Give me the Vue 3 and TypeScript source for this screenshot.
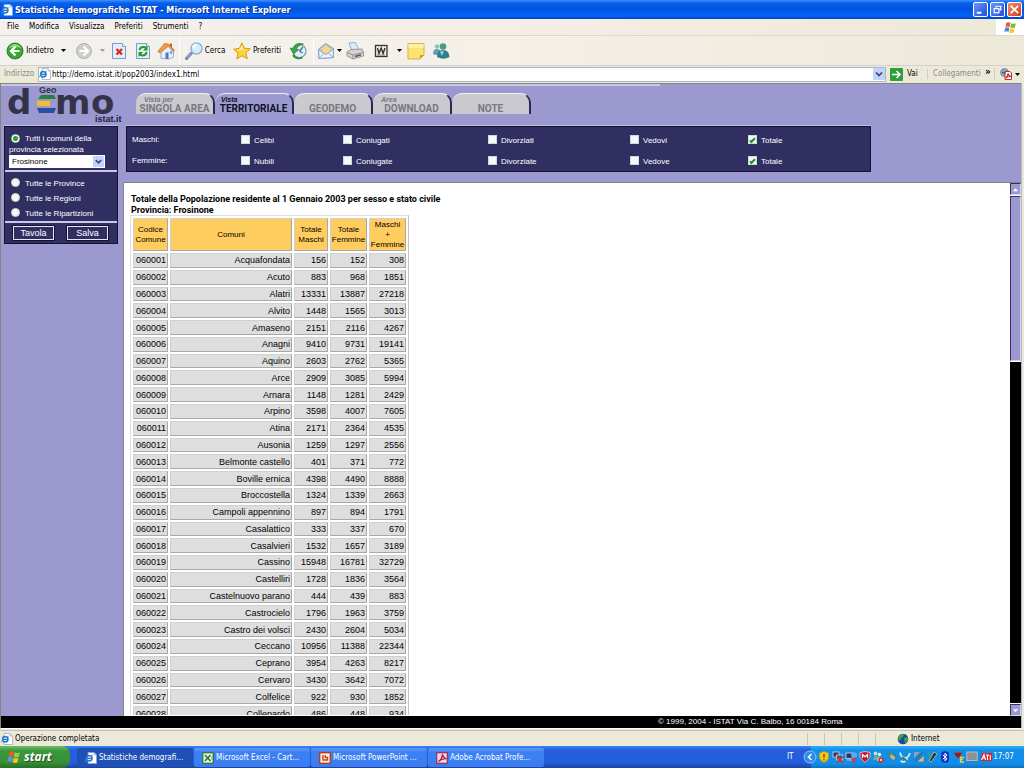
<script setup lang="ts">
import { ref } from 'vue'

interface Row { code: string; name: string; m: number; f: number }

const source: [string, number, number][] = [
  ['Acquafondata', 156, 152], ['Acuto', 883, 968], ['Alatri', 13331, 13887], ['Alvito', 1448, 1565],
  ['Amaseno', 2151, 2116], ['Anagni', 9410, 9731], ['Aquino', 2603, 2762], ['Arce', 2909, 3085],
  ['Arnara', 1148, 1281], ['Arpino', 3598, 4007], ['Atina', 2171, 2364], ['Ausonia', 1259, 1297],
  ['Belmonte castello', 401, 371], ['Boville ernica', 4398, 4490], ['Broccostella', 1324, 1339],
  ['Campoli appennino', 897, 894], ['Casalattico', 333, 337], ['Casalvieri', 1532, 1657],
  ['Cassino', 15948, 16781], ['Castelliri', 1728, 1836], ['Castelnuovo parano', 444, 439],
  ['Castrocielo', 1796, 1963], ['Castro dei volsci', 2430, 2604], ['Ceccano', 10956, 11388],
  ['Ceprano', 3954, 4263], ['Cervaro', 3430, 3642], ['Colfelice', 922, 930], ['Collepardo', 486, 448],
]
const rows: Row[] = source.map(([name, m, f], i) => ({
  code: '06' + String(i + 1).padStart(4, '0'), name, m, f,
}))

const menus = ['File', 'Modifica', 'Visualizza', 'Preferiti', 'Strumenti', '?']
const tabs = [
  { top: 'Vista per', text: 'SINGOLA AREA', active: false },
  { top: 'Vista', text: 'TERRITORIALE', active: true },
  { top: '', text: 'GEODEMO', active: false },
  { top: 'Area', text: 'DOWNLOAD', active: false },
  { top: '', text: 'NOTE', active: false },
]
const filters = ref([
  { title: 'Maschi:', items: [['Celibi', false], ['Coniugati', false], ['Divorziati', false], ['Vedovi', false], ['Totale', true]] as [string, boolean][] },
  { title: 'Femmine:', items: [['Nubili', false], ['Coniugate', false], ['Divorziate', false], ['Vedove', false], ['Totale', true]] as [string, boolean][] },
])
const scope = ref('comuni')
const scopes = [
  { id: 'province', text: 'Tutte le Province' },
  { id: 'regioni', text: 'Tutte le Regioni' },
  { id: 'ripartizioni', text: 'Tutte le Ripartizioni' },
]
const address = ref('http://demo.istat.it/pop2003/index1.html')
const tasks = [
  { icon: 'i-iedoc', text: 'Statistiche demografi...', active: true },
  { icon: 'i-excel', text: 'Microsoft Excel - Cart...', active: false },
  { icon: 'i-ppt', text: 'Microsoft PowerPoint ...', active: false },
  { icon: 'i-acro', text: 'Adobe Acrobat Profe...', active: false },
]
const tray = ['t-shield', 't-netx', 't-monx', 't-mcafee', 't-people', 't-usb', 't-swirl', 't-pen', 't-wand', 't-bt', 't-tri', 't-disp', 't-ati']
</script>

<template>
  <div class="screen">
    <svg class="defs" aria-hidden="true">
      <symbol id="i-iedoc" viewBox="0 0 12 12">
        <path d="M3 0.5h6l2.5 2.5v8.5H3z" fill="#fff" stroke="#8aa6cc" stroke-width=".7" />
        <path d="M9 .5V3h2.5" fill="#cfe0f4" stroke="#8aa6cc" stroke-width=".6" />
        <circle cx="4.3" cy="6.3" r="2.7" fill="#d9f0ff" stroke="#2472c8" stroke-width="1.5" />
        <path d="M2 6.4h4.8" stroke="#2472c8" stroke-width="1.2" />
        <path d="M.6 9.6C-.4 7.5 4 3 8 3.2" fill="none" stroke="#54a5e6" stroke-width=".8" />
      </symbol>
      <symbol id="i-excel" viewBox="0 0 12 12">
        <rect x=".7" y=".7" width="10.6" height="10.6" fill="#e9f6e5" stroke="#2b7a3a" stroke-width="1.3" />
        <path d="M3 3l5.5 6M8.5 3L3 9" stroke="#237a35" stroke-width="1.6" /><path d="M9 5h2M9 7h2" stroke="#69a874" />
      </symbol>
      <symbol id="i-ppt" viewBox="0 0 12 12">
        <rect x=".7" y=".7" width="10.6" height="10.6" fill="#fff0e6" stroke="#b93c17" stroke-width="1.4" />
        <path d="M4 3v5h4.500V5.500H6.300V3" fill="none" stroke="#cb4319" stroke-width="1.400" />
      </symbol>
      <symbol id="i-acro" viewBox="0 0 12 12">
        <rect x=".7" y=".7" width="10.6" height="10.6" fill="#efd5ec" stroke="#9b2a54" stroke-width="1.2" />
        <path d="M2.5 9.5C5 8 6.500 5 6.300 2.300c1 3 2 4 4 4.500C7 6.500 4.500 7.500 2.500 9.500z" fill="none" stroke="#a31b3e" stroke-width="1.2" />
      </symbol>
      <symbol id="t-shield" viewBox="0 0 12 12">
        <path d="M6 .5l4.600 1.500v4Q10.600 9.500 6 11.500 1.400 9.500 1.400 6V2z" fill="#f7c51e" stroke="#c99008" stroke-width=".7" />
        <path d="M6 3v3.800M6 8v1.400" stroke="#6b4a00" stroke-width="1.300" />
      </symbol>
      <symbol id="t-netx" viewBox="0 0 12 12">
        <rect x="1" y="1" width="6" height="5" fill="#27356d" stroke="#b8c2d4" /><rect x="4.500" y="4" width="6" height="5" fill="#3656a4" stroke="#b8c2d4" />
        <path d="M5 5.500l6 6M11 5.500l-6 6" stroke="#e02c1c" stroke-width="1.700" />
      </symbol>
      <symbol id="t-monx" viewBox="0 0 12 12">
        <rect x="1" y="2" width="6" height="5.500" fill="#27356d" stroke="#b8c2d4" /><path d="M2 9h5" stroke="#b8c2d4" /><path d="M9 1v6M11 2v4" stroke="#c9d7ef" stroke-width=".8" />
        <path d="M6.500 7l4.500 4.500M11 7l-4.500 4.500" stroke="#d03a4c" stroke-width="1.500" />
      </symbol>
      <symbol id="t-mcafee" viewBox="0 0 12 12">
        <path d="M1 1.500L6 .5l5 1v5L6 11.500l-5-5z" fill="#c1183b" stroke="#f0d0d8" stroke-width=".8" /><path d="M3.500 7V3.500L6 5.800l2.500-2.300V7" fill="none" stroke="#fff" stroke-width="1.200" />
      </symbol>
      <symbol id="t-people" viewBox="0 0 12 12">
        <circle cx="3.500" cy="2.500" r="1.900" fill="#bfe3d4" /><path d="M1 9q0-4.500 3-4.500T7 9z" fill="#62b09a" /><circle cx="7.500" cy="3.500" r="1.800" fill="#e9f6f1" /><path d="M5 10q0-4 3-4t3 4z" fill="#a5d8c3" />
        <circle cx="9" cy="9" r="2.700" fill="#dd2a1a" /><path d="M7.900 7.900l2.200 2.200M10.100 7.900l-2.200 2.200" stroke="#fff" stroke-width=".8" />
      </symbol>
      <symbol id="t-usb" viewBox="0 0 12 12">
        <path d="M2 2l4 1 4 3-2 4-4-3z" fill="#a8b4b0" stroke="#4c6658" stroke-width=".7" /><path d="M1.500 1.500l3 3M8 4l2-2" stroke="#2e9d3e" stroke-width="1.600" />
      </symbol>
      <symbol id="t-swirl" viewBox="0 0 12 12">
        <path d="M1 1.500q1 5 4.500 5.500T11 2M1.500 10q4.500 2.500 7-2.500" fill="none" stroke="#d8e8ee" stroke-width="1.800" /><path d="M3 6l5 4" stroke="#27896c" stroke-width="1.800" />
      </symbol>
      <symbol id="t-pen" viewBox="0 0 12 12">
        <path d="M1 1h6L1 7z" fill="#9b9faa" /><path d="M11 4v7H4z" fill="#c1bba7" stroke="#69645a" stroke-width=".6" /><path d="M2 10L10 1" stroke="#4c525d" />
      </symbol>
      <symbol id="t-wand" viewBox="0 0 12 12">
        <path d="M8 1l3 2-6 8-2-1z" fill="#24312c" stroke="#b4ceb8" stroke-width=".8" /><path d="M2 2l3 5" stroke="#44a45b" stroke-width="1.700" />
      </symbol>
      <symbol id="t-bt" viewBox="0 0 12 12">
        <rect x="2" y=".3" width="8" height="11.400" rx="3.500" fill="#0a35c4" /><path d="M3.800 3.800l4.200 4L6 9.800V2.200l2 2-4.200 4" fill="none" stroke="#fff" />
      </symbol>
      <symbol id="t-tri" viewBox="0 0 12 12">
        <path d="M.5 1.500h9L5 8z" fill="#cf2323" /><path d="M2 3h6M3 5h4" stroke="#321414" stroke-width=".8" /><path d="M11 6.500H7.500v4.500H11M7.500 8.700H10" fill="none" stroke="#f4d531" stroke-width="1.300" />
      </symbol>
      <symbol id="t-disp" viewBox="0 0 12 12">
        <rect x=".8" y="1" width="10.400" height="8.500" fill="#8e9297" stroke="#b7bcc0" /><path d="M1 11h10" stroke="#686c70" stroke-width="1.200" stroke-dasharray="2 1" />
      </symbol>
      <symbol id="t-ati" viewBox="0 0 12 12">
        <path d="M2 2h10v8H0z" fill="#dc2430" /><path d="M1.500 9L4 3.500 5.500 9M2.500 7h3M6 4h3M7.500 4v5M10.300 4v5" fill="none" stroke="#fff" stroke-width="1.100" />
      </symbol>
    </svg>

    <header class="titlebar">
      <svg class="ic12"><use href="#i-iedoc" /></svg>
      <h1>Statistiche demografiche ISTAT - Microsoft Internet Explorer</h1>
      <button class="win" aria-label="Riduci a icona"><svg viewBox="0 0 14 14"><path d="M3 10.500h5" stroke="#fff" stroke-width="2" /></svg></button>
      <button class="win" aria-label="Ripristina"><svg viewBox="0 0 14 14"><path d="M5.500 5V3.500h5v4H9" fill="none" stroke="#fff" stroke-width="1.300" /><rect x="3.500" y="6" width="5" height="4.500" fill="none" stroke="#fff" stroke-width="1.300" /></svg></button>
      <button class="win close" aria-label="Chiudi"><svg viewBox="0 0 14 14"><path d="M3 3l8 8M11 3l-8 8" stroke="#fff" stroke-width="1.800" /></svg></button>
    </header>

    <nav class="menubar">
      <button v-for="m in menus" :key="m">{{ m }}</button>
      <span class="flag">
        <svg viewBox="0 0 14 14"><path d="M2.500 2Q5 .5 7 2L6 6.500Q4 5.300 1.500 6.500z" fill="#ee5a24" /><path d="M7.800 2.300Q10 3.600 12.800 2.300L11.700 7Q9 8 6.800 6.800z" fill="#7cba35" /><path d="M1.300 7.300Q4 6 5.800 7.300L4.800 11.800Q3 10.500.3 11.800z" fill="#4a86dd" /><path d="M6.600 7.700Q9 9 11.500 7.800L10.400 12.500Q8 13.500 5.600 12.300z" fill="#f7c52b" /></svg>
      </span>
    </nav>

    <div class="toolbar">
      <button class="tool">
        <svg class="ic18" viewBox="0 0 18 18"><circle cx="9" cy="9" r="8" fill="#3da435" stroke="#2d8228" /><path d="M3 6q2-4 6-4t6 4q-6-2-12 0z" fill="#8ad67d" /><path d="M9.500 4.500L5 9l4.500 4.500M5.500 9h8" fill="none" stroke="#fff" stroke-width="2.200" /></svg>
        <span>Indietro</span>
      </button>
      <button aria-label="Cronologia indietro"><svg class="caret" viewBox="0 0 5 3"><path d="M0 0h5L2.500 3z" /></svg></button>
      <button aria-label="Avanti"><svg class="ic18" viewBox="0 0 18 18"><circle cx="9" cy="9" r="7.500" fill="#cfcfcb" stroke="#b3b3ae" /><path d="M8.500 4.500L13 9l-4.500 4.500M12.500 9h-8" fill="none" stroke="#fff" stroke-width="2.200" /></svg></button>
      <button aria-label="Cronologia avanti"><svg class="caret pale" viewBox="0 0 5 3"><path d="M0 0h5L2.500 3z" /></svg></button>
      <button aria-label="Termina"><svg class="ic18" viewBox="0 0 18 18"><path d="M2.500 1.500h10l3 3v12h-13z" fill="#e3edfb" stroke="#7b9bd0" /><path d="M12.500 1.500v3h3" fill="#fff" stroke="#7b9bd0" /><path d="M6.500 7l5.500 5.500M12 7l-5.500 5.500" stroke="#e0261a" stroke-width="2.300" /></svg></button>
      <button aria-label="Aggiorna"><svg class="ic18" viewBox="0 0 18 18"><path d="M2.500 1.500h10l3 3v12h-13z" fill="#e3f1ee" stroke="#7b9bd0" /><path d="M12.500 1.500v3h3" fill="#fff" stroke="#7b9bd0" /><path d="M5.500 8q.5-3 4-3 1.500 0 2.500 1M12.500 10q-.5 3.500-4 3.500-1.500 0-2.500-1" fill="none" stroke="#229a2c" stroke-width="2" /><path d="M13.500 3.500V8.500H9zM4.500 15V10H9z" fill="#229a2c" /></svg></button>
      <button aria-label="Pagina iniziale"><svg class="ic18" viewBox="0 0 18 18"><path d="M4 8v8.500l8 .5 4.500-2V7L11 3z" fill="#e9eefb" stroke="#8299c8" stroke-width=".8" /><path d="M.8 9.500L7.500 1.500l4 .5 6 6.500-1.300 1-5-5.300L3 11z" fill="#f09a45" stroke="#c16a24" stroke-width=".7" /><path d="M8.500 16.800v-6l3-.5V17z" fill="#4a76c9" /><path d="M13 9h2.200v3H13z" fill="#74a5e4" /><path d="M13 1.500h2v4l-2-2z" fill="#cc5a3a" /></svg></button>
      <i class="sep" />
      <button class="tool">
        <svg class="ic18" viewBox="0 0 18 18"><path d="M1.500 16.500L6.500 11" stroke="#6f7fae" stroke-width="3" stroke-linecap="round" /><path d="M1.800 15.800L6 11.500" stroke="#bcc9ea" /><circle cx="11.500" cy="6.500" r="5.500" fill="#d4ecfb" stroke="#8bb2da" stroke-width="1.400" /><path d="M8 6q.5-3 3.500-3.500" fill="none" stroke="#fff" stroke-width="1.800" /></svg>
        <span>Cerca</span>
      </button>
      <button class="tool">
        <svg class="ic18" viewBox="0 0 18 18"><path d="M8.800.8l2.500 5.400 6 .6-4.500 4 1.500 6-5.300-3.100-5.200 3.300 1.200-6.200L.6 7.200l5.800-.8z" fill="#fbd53c" stroke="#d79b1c" /><path d="M8.700 3.500l1.300 4-4.500 1z" fill="#fff3a4" /></svg>
        <span>Preferiti</span>
      </button>
      <button aria-label="Cronologia"><svg class="ic18" viewBox="0 0 18 18"><circle cx="10.500" cy="9" r="6.500" fill="#dfeefb" stroke="#7f98a9" stroke-width="1.200" /><path d="M10.500 9l3.500-4M10.500 9l3 2" fill="none" stroke="#39699f" stroke-width="1.300" /><path d="M14.500 2Q7-.5 3.500 6.500L1 6l3.500 6L10 7.500 7 7q2.500-4 7.500-5z" fill="#39a444" stroke="#1e7831" stroke-width=".6" /><path d="M4 13q3 5 9.500 2.500" fill="none" stroke="#2b8b39" stroke-width="1.800" /></svg></button>
      <i class="sep" />
      <button class="tool" aria-label="Posta">
        <svg class="ic18" viewBox="0 0 18 18"><path d="M1.500 7.500L8.500 1.500l8 5v9l-14.500 1z" fill="#b9d7f2" stroke="#7a9dc8" /><path d="M4 6.500l4.500-3.700 5.500 3.400-.5 4-5 2-4-2.500z" fill="#f5d692" stroke="#d6aa60" stroke-width=".7" /><path d="M1.700 8l7 4.500 7.700-5v8L2 16.500z" fill="#e7f3fc" stroke="#7a9dc8" stroke-width=".8" /><path d="M2 16.300l5-5M16.300 15.300l-5-4.200" stroke="#7a9dc8" stroke-width=".8" /></svg>
        <svg class="caret" viewBox="0 0 5 3"><path d="M0 0h5L2.500 3z" /></svg>
      </button>
      <button aria-label="Stampa"><svg class="ic18" viewBox="0 0 18 18"><path d="M3 1l6.500-.5L13 8 6 9.500z" fill="#d9ecfb" stroke="#7fa6d0" stroke-width=".8" /><path d="M1 10l4-2.500 11-.5 1.500 3v4L7 17 1 14z" fill="#d6d5d2" stroke="#85858a" stroke-width=".8" /><path d="M1 10.500l6 2.500 10-2.500M7 13v4" fill="none" stroke="#8d8d90" /><path d="M9 14.500l6-1.800" stroke="#55565c" stroke-width="1.500" /></svg></button>
      <button aria-label="Modifica con Word"><svg class="ic18" viewBox="0 0 18 18"><rect x="3.500" y="3.500" width="11.500" height="11" fill="#ededeb" stroke="#333" stroke-width="1.300" /><path d="M5.500 6l1.500 5.500L9.200 6l1.900 5.500L13 6" fill="none" stroke="#333" stroke-width="1.400" /><path d="M5 13h8" stroke="#777" stroke-width=".8" /></svg></button>
      <button aria-label="Altri editor"><svg class="caret" viewBox="0 0 5 3"><path d="M0 0h5L2.500 3z" /></svg></button>
      <button aria-label="Discussione"><svg class="ic18" viewBox="0 0 18 18"><path d="M1 1.500h16V13l-4 4H1z" fill="#fbe271" stroke="#d5b14c" /><path d="M1.500 2h15v4h-15z" fill="#fdf0a4" /><path d="M17 13h-4v4z" fill="#c99c38" /></svg></button>
      <button aria-label="Messenger"><svg class="ic18" viewBox="0 0 18 18"><circle cx="5" cy="4.500" r="2.200" fill="#8ec3b2" /><path d="M1 12q0-5 4-5t4 5q-4 2-8 0z" fill="#5c9fb0" /><circle cx="11" cy="4.500" r="3.300" fill="#479d7d" /><path d="M5 15q0-7 6-7t6.500 7q-6 3.500-12.500 0z" fill="#2f7f91" /><path d="M8 10q2-1.500 4-.5l-2 4.500z" fill="#8fd2c8" /></svg></button>
    </div>

    <div class="addressbar">
      <label for="addr">Indirizzo</label>
      <div class="field">
        <svg class="ic12"><use href="#i-iedoc" /></svg>
        <input id="addr" v-model="address" type="text" />
        <button class="drop" aria-label="Mostra indirizzi"><svg viewBox="0 0 12 12"><path d="M3 4.500l3 3 3-3" fill="none" stroke="#34476f" stroke-width="1.700" /></svg></button>
      </div>
      <button class="go"><svg viewBox="0 0 13 13"><rect width="13" height="13" rx="1" fill="#2f9e3b" /><path d="M2 6.500h8M6.500 3l3.500 3.500L6.500 10" fill="none" stroke="#fff" stroke-width="1.500" /></svg>Vai</button>
      <span class="links">Collegamenti</span>
      <button class="more" aria-label="Altri collegamenti">»</button>
      <button class="pdf" aria-label="Converti in PDF"><svg class="ic12" viewBox="0 0 12 12"><circle cx="4.500" cy="4.500" r="4" fill="#79a8c9" stroke="#56788f" stroke-width=".6" /><path d="M5 3.500h5l1.500 1.500v6.500H5z" fill="#fff" stroke="#b02020" stroke-width=".9" /><path d="M2 4.500l4 .5M5.500 10q2.500-2 2.500-4.500 1 3 3 3-3 0-5.500 1.500z" fill="none" stroke="#c82020" stroke-width="1.100" /></svg><svg class="caret" viewBox="0 0 5 3"><path d="M0 0h5L2.500 3z" /></svg></button>
    </div>

    <main class="page">
      <div class="masthead">
        <svg class="logo" viewBox="0 0 124 42" role="img" aria-label="Demo istat.it">
          <text class="big" x="6" y="30">d</text>
          <text class="big" x="54" y="30">m</text>
          <text class="big" x="90" y="30">o</text>
          <text class="geo" x="38" y="9">Geo</text>
          <path d="M40 11h13l2 4H37z" fill="#26843c" />
          <path d="M36 17h13v5H36z" fill="#f6bd31" />
          <path d="M36 24h19l-2 5H38z" fill="#2b4e9e" />
          <text class="ist" x="94" y="38">istat.it</text>
        </svg>
        <nav class="tabs">
          <a v-for="t in tabs" :key="t.text" href="#" class="tab" :class="{ active: t.active }">
            <small v-if="t.top">{{ t.top }}</small><span>{{ t.text }}</span>
          </a>
        </nav>
      </div>

      <div class="body">
        <form class="side" @submit.prevent>
          <section>
            <label class="opt first"><input v-model="scope" type="radio" value="comuni" /><span>Tutti i comuni della</span></label>
            <label class="prov" for="prov">provincia selezionata</label>
            <div class="select">
              <select id="prov"><option>Frosinone</option></select>
              <svg viewBox="0 0 12 12"><rect width="12" height="12" rx="1" fill="#c2d2fb" /><path d="M3 4.500l3 3 3-3" fill="none" stroke="#34476f" stroke-width="1.700" /></svg>
            </div>
          </section>
          <section class="group">
            <label v-for="s in scopes" :key="s.id" class="opt"><input v-model="scope" type="radio" :value="s.id" /><span>{{ s.text }}</span></label>
          </section>
          <section class="actions"><button>Tavola</button><button>Salva</button></section>
        </form>

        <div class="right">
          <form class="filters" @submit.prevent>
            <div v-for="r in filters" :key="r.title" class="frow">
              <span>{{ r.title }}</span>
              <label v-for="it in r.items" :key="it[0]"><input v-model="it[1]" type="checkbox" /><span>{{ it[0] }}</span></label>
            </div>
          </form>
          <div class="frame">
            <div class="doc">
              <h2>Totale della Popolazione residente al 1 Gennaio 2003 per sesso e stato civile<br />Provincia: Frosinone</h2>
              <table>
                <colgroup><col class="c1" /><col class="c2" /><col class="c3" /><col class="c4" /><col class="c4" /></colgroup>
                <thead>
                  <tr><th>Codice<br />Comune</th><th>Comuni</th><th>Totale<br />Maschi</th><th>Totale<br />Femmine</th><th>Maschi<br />+<br />Femmine</th></tr>
                </thead>
                <tbody>
                  <tr v-for="r in rows" :key="r.code"><td>{{ r.code }}</td><td>{{ r.name }}</td><td>{{ r.m }}</td><td>{{ r.f }}</td><td>{{ r.m + r.f }}</td></tr>
                </tbody>
              </table>
            </div>
            <div class="scroll">
              <button aria-label="Su"><svg viewBox="0 0 10 10"><path d="M2 7h6L5 3.500z" fill="#fff" /></svg></button>
              <div class="thumb" />
              <div class="track" />
              <button aria-label="Giù"><svg viewBox="0 0 10 10"><path d="M2 3.500h6L5 7z" fill="#fff" /></svg></button>
            </div>
          </div>
        </div>
      </div>
      <footer class="copy">© 1999, 2004 - ISTAT Via C. Balbo, 16 00184 Roma</footer>
    </main>

    <div class="status">
      <svg class="ic12"><use href="#i-iedoc" /></svg><span class="msg">Operazione completata</span>
      <i v-for="n in 5" :key="n" class="pane" />
      <span class="zone"><svg class="ic12" viewBox="0 0 12 12"><circle cx="6" cy="6" r="5.300" fill="#17479e" /><path d="M2 3q3-3 5-1.500L6 4 4 5 3 8 1 6zM7 5l3.500-1 .5 3-3 3.500z" fill="#46a33e" /></svg>Internet</span>
    </div>

    <footer class="taskbar">
      <button class="start">
        <svg viewBox="0 0 14 14"><path d="M2.500 2Q5 .5 7 2L6 6.500Q4 5.300 1.500 6.500z" fill="#ee5a24" /><path d="M7.800 2.300Q10 3.600 12.800 2.300L11.700 7Q9 8 6.800 6.800z" fill="#8fd04a" /><path d="M1.300 7.300Q4 6 5.800 7.300L4.800 11.800Q3 10.500.3 11.800z" fill="#5a96f0" /><path d="M6.600 7.700Q9 9 11.500 7.800L10.400 12.500Q8 13.500 5.600 12.300z" fill="#f7c52b" /></svg>
        start
      </button>
      <div class="tasks">
        <button v-for="t in tasks" :key="t.text" class="task" :class="{ on: t.active }"><svg class="ic12"><use :href="'#' + t.icon" /></svg>{{ t.text }}</button>
      </div>
      <span class="lang">IT</span>
      <div class="tray">
        <button class="chev" aria-label="Mostra icone"><svg viewBox="0 0 14 14"><circle cx="7" cy="7" r="6" fill="#2c8be8" stroke="#8cc6f8" /><path d="M8.500 4L5.500 7l3 3" fill="none" stroke="#fff" stroke-width="1.600" /></svg></button>
        <svg v-for="i in tray" :key="i" class="ic12"><use :href="'#' + i" /></svg>
        <time>17:07</time>
      </div>
    </footer>
  </div>
</template>

<style>
html, body { margin: 0; background: #ece9d8; }
</style>

<style scoped>
.screen { height: 100vh; display: flex; flex-direction: column; overflow: hidden; font: 8px/10px "DejaVu Sans Condensed", "Liberation Sans", sans-serif; color: #000; background: #ece9d8; }
.screen > * { flex-shrink: 0; }
*, *::before, *::after { box-sizing: border-box; }
.defs { position: absolute; width: 0; height: 0; }
button { font: inherit; color: inherit; background: none; border: 0; padding: 0; margin: 0; white-space: nowrap; }
svg { display: block; flex: none; }
.ic12 { width: 12px; height: 12px; }
.ic18 { width: 18px; height: 18px; }
.caret { width: 5px; height: 3px; }
.caret.pale { opacity: .35; }

.titlebar { height: 19px; display: flex; align-items: center; gap: 2px; padding: 0 2px 0 1px; background: linear-gradient(#3c93ff, #0a5fea 3px, #0053e1 9px, #0364fb 16px, #003fc0); }
.titlebar h1 { flex: 1; margin: 0; font: bold 9px/14px "DejaVu Sans Condensed", "Liberation Sans", sans-serif; color: #fff; text-shadow: 1px 1px #10308a; }
.win { width: 15px; height: 15px; border: 1px solid #fff; border-radius: 2px; background: linear-gradient(135deg, #6a96f5, #1d4fdc); }
.win svg { width: 100%; height: 100%; }
.win.close { background: linear-gradient(135deg, #f09377, #d2391a); }

.menubar { height: 17px; display: flex; align-items: stretch; gap: 10px; padding-left: 7px; background: linear-gradient(90deg, #f2f1ee, #f7ede5 50%, #ece9d8); border-bottom: 1px solid #dad7cb; }
.flag { margin-left: auto; width: 28px; background: #fff; display: grid; place-items: center; }
.flag svg { width: 13px; height: 13px; }

.toolbar { height: 30px; display: grid; grid-template-columns: 50px 17px 24px 12px 22px 25px 22px 4px 48px 56px 26px 4px 28px 24px 28px 8px 25px 25px; align-items: center; justify-items: center; padding-left: 5px; background: linear-gradient(90deg, #f2f1ee, #f5f0e8 50%, #ece9d8); border-bottom: 1px solid #d0d2cb; }
.tool { display: flex; align-items: center; gap: 2px; }
.sep { width: 1px; height: 26px; background: #d2cfc3; border-right: 1px solid #fff; }

.addressbar { height: 16px; display: flex; align-items: center; padding-left: 4px; background: #ece9d8; }
.addressbar label, .links { color: #8b8a83; }
.addressbar label { width: 34px; }
.field { flex: 1; height: 15px; display: flex; align-items: center; background: #fff; border: 1px solid #a9b6c6; }
.field input { flex: 1; min-width: 0; height: 12px; border: 0; padding: 0 1px; outline: 0; background: none; font: inherit; }
.drop { width: 12px; height: 12px; background: #c2d2fb; border-radius: 1px; }
.go { width: 41px; display: flex; align-items: center; gap: 4px; padding-left: 4px; }
.go svg { width: 13px; height: 13px; }
.links { width: 55px; padding-left: 5px; border-left: 1px solid #d0cdbf; }
.more { width: 12px; font-weight: bold; font-size: 10px; line-height: 8px; padding-bottom: 4px; }
.pdf { width: 30px; display: flex; align-items: center; gap: 3px; padding-left: 5px; border-left: 1px solid #d0cdbf; }

.page { flex: 1 1 0; min-height: 0; display: flex; flex-direction: column; margin: 1px 2px 1px 0; border: 1px solid #85857d; border-bottom-color: #fff; border-right-color: #b9b6c9; background: #9c98d0; font: 8px/10px "Liberation Sans", sans-serif; }
.masthead { flex: none; height: 42px; display: flex; background: linear-gradient(#c9c7e4, #c9c7e4) 0 0 / 659px 2px no-repeat; }
.logo { width: 124px; height: 42px; }
.big { font: bold 34px "DejaVu Sans", sans-serif; fill: #33334a; }
.geo { font: bold 9px "Liberation Sans", sans-serif; fill: #33334a; }
.ist { font: bold 9px "Liberation Sans", sans-serif; fill: #22223a; }
.tabs { display: flex; align-items: flex-start; padding: 9px 0 0 11px; }
.tab { position: relative; width: 79px; height: 21px; padding-top: 9px; text-align: center; text-decoration: none; color: #77777c; background: #cbc9d0; border-top: 1px solid #f1f0f6; border-right: 2px solid #2b2850; border-radius: 10px 10px 0 0; font: bold 10px/11px "Liberation Sans Narrow", "Roboto", sans-serif; white-space: nowrap; }
.tab small { position: absolute; left: 8px; top: 2px; font: italic bold 7px/7px "Liberation Sans", sans-serif; }
.tab.active { background: #9c98d0; color: #111122; }
.tab.active small { left: 6px; }

.body { flex: 1; min-height: 0; display: flex; }
.side { width: 114px; margin: 0 8px 0 3px; align-self: flex-start; color: #fff; background: #312f62; border: 1px solid #15132f; box-shadow: 0 -1px #c1bfe2; }
.side section { padding: 4px 4px 2px; }
.side section + section { border-top: 2px solid #c9c7ea; }
.opt { height: 15px; display: flex; align-items: center; gap: 5px; padding-left: 2px; white-space: nowrap; }
.opt span { padding-top: 2px; }
.opt.first { height: 14px; }
.opt input { appearance: none; width: 9px; height: 9px; margin: 0; border-radius: 50%; background: #f4f7f4; border: 1px solid #c9d3d6; }
.opt input:checked { background: radial-gradient(#2aa12a 0 2px, #f4f7f4 3px); }
.prov { display: block; height: 10px; }
.select { position: relative; width: 96px; height: 13px; }
.select select { appearance: none; width: 100%; height: 13px; border: 0; border-radius: 0; padding: 0 3px; font: inherit; background: #fff; color: #000; }
.select svg { position: absolute; right: 1px; top: 1px; width: 11px; height: 11px; pointer-events: none; }
.side .group { padding: 3px 4px 1px; }
.side .actions { display: flex; justify-content: space-between; padding: 3px 9px 3px 8px; }
.actions button { width: 41px; height: 14px; font-size: 9px; line-height: 10px; border: 1px solid #e6e4fa; outline: 1px solid #15132f; background: #312f62; }

.right { flex: 1; min-width: 0; display: flex; flex-direction: column; }
.filters { flex: none; width: 745px; max-width: 100%; height: 46px; margin-bottom: 10px; color: #fff; background: #312f62; border: 1px solid #15132f; padding: 2px 5px 0; box-shadow: 0 -1px #c1bfe2; }
.frow { height: 21px; display: grid; grid-template-columns: 109px 102px 145px 142px 118px 1fr; align-items: center; }
.frow label { display: flex; align-items: center; gap: 4px; }
.frow label span { padding-top: 2px; }
.frow input { appearance: none; width: 9px; height: 9px; margin: 0; background: #f4f9f9; border: 1px solid #cdd8de; display: grid; place-items: center; }
.frow input:checked::after { content: ""; width: 3px; height: 6px; border: solid #219021; border-width: 0 2px 2px 0; rotate: 45deg; }

.frame { flex: 1; min-height: 0; display: flex; margin-left: -3px; background: #fff; border-top: 1px solid #85857d; border-left: 1px solid #85857d; }
.doc { flex: 1; min-width: 0; overflow-y: auto; scrollbar-width: none; padding: 11px 0 0 6px; margin-bottom: 1px; }
h2 { margin: 0; padding-left: 1px; font: bold 9px/11px "Roboto", "Liberation Sans", sans-serif; }
table { width: 279px; height: 509px; margin-top: -1px; table-layout: fixed; border-collapse: separate; border-spacing: 2px; border: 1px solid #c4c4c4; border-top-color: #ddd; border-left-color: #ddd; }
.c1 { width: 35px; } .c2 { width: 122px; } .c3 { width: 34px; } .c4 { width: 37px; }
th { height: 33px; padding: 0; background: #ffcc60; font: 8px/10px "Liberation Sans", sans-serif; }
td { padding: 0 1px; background: #dedede; text-align: right; font-size: 9px; line-height: 10px; white-space: nowrap; }
th, td { border: 1px solid; border-color: #d0d0d0 #a8a8a8 #a8a8a8 #d0d0d0; }

.scroll { width: 11px; display: flex; flex-direction: column; background: #fff; gap: 1px; }
.scroll button, .thumb { background: #9c98d0; border: 1px solid #d5d3ee; border-top-color: #34325f; border-left-color: #34325f; }
.scroll button { height: 12px; }
.scroll svg { width: 9px; height: 9px; }
.thumb { flex: 164; }
.track { flex: 343; background: #000; }

.copy { flex: none; height: 12px; background: #000; color: #fff; padding-left: 657px; line-height: 11px; white-space: nowrap; }

.status { height: 16px; display: flex; align-items: center; padding-left: 1px; border-top: 1px solid #c5c2b2; }
.msg { flex: 1; padding-left: 2px; }
.pane { width: 17px; height: 12px; border-left: 1px solid #c9c6b6; }
.zone { width: 132px; display: flex; align-items: center; gap: 2px; padding-left: 5px; }

.taskbar { height: 22px; display: flex; align-items: stretch; color: #fff; background: linear-gradient(#3b85f0, #245edb 4px, #235ddb 17px, #1941a5); }
.start { width: 70px; display: flex; align-items: center; gap: 3px; padding-left: 7px; background: linear-gradient(#6cc069, #3b963b 5px, #389038 16px, #276f27); border-radius: 0 8px 8px 0; font: italic bold 12px/16px "Open Sans", "Liberation Sans", sans-serif; text-shadow: 1px 1px 1px #1c4f1c; }
.start svg { width: 14px; height: 14px; }
.tasks { display: flex; flex: 1; padding: 2px 0 1px 7px; gap: 1px; }
.task { width: 116px; display: flex; align-items: center; gap: 2px; padding-left: 8px; border-radius: 2px; background: linear-gradient(#5a98fb, #3c81f3 4px, #3a7cf0); }
.task.on { background: #1e50b8; }
.lang { align-self: center; width: 24px; }
.tray { width: 213px; display: flex; align-items: center; justify-content: space-between; padding-right: 10px; background: linear-gradient(#2fb0f2, #1290e9 4px, #118de6 18px, #0f6fc0); }
.chev { margin-left: -8px; }
.chev svg { width: 14px; height: 14px; }
</style>
